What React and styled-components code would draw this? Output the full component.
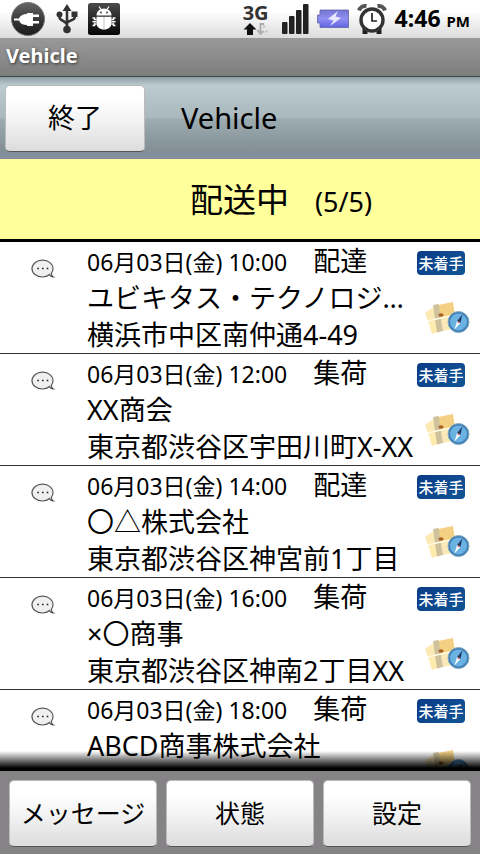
import React from "react";
import styled, { createGlobalStyle } from "styled-components";

const deliveries = [
  { id: 1, time: "06月03日(金) 10:00", kind: "配達", name: "ユビキタス・テクノロジ…", address: "横浜市中区南仲通4-49" },
  { id: 2, time: "06月03日(金) 12:00", kind: "集荷", name: "XX商会", address: "東京都渋谷区宇田川町X-XX" },
  { id: 3, time: "06月03日(金) 14:00", kind: "配達", name: "〇△株式会社", address: "東京都渋谷区神宮前1丁目" },
  { id: 4, time: "06月03日(金) 16:00", kind: "集荷", name: "×〇商事", address: "東京都渋谷区神南2丁目XX" },
  { id: 5, time: "06月03日(金) 18:00", kind: "集荷", name: "ABCD商事株式会社" },
];

function PlugIcon() {
  return (
    <svg width="36" height="36" viewBox="0 0 36 36" aria-hidden="true">
      <defs>
        <linearGradient id="plug" x1="0" y1="0" x2="0" y2="1">
          <stop offset="0" stopColor="#666" />
          <stop offset="0.6" stopColor="#333" />
          <stop offset="1" stopColor="#1c1c1c" />
        </linearGradient>
      </defs>
      <circle cx="18" cy="18" r="16.5" fill="url(#plug)" stroke="#777" />
      <path
        d="M4 17.5h5c1-3 4-4.500 8-4.500V12h6v1.500h6V16h-6v4h6v2.500h-6V25h-6v-1c-4 0-7-1.500-8-4.500H4z"
        fill="#fff"
      />
    </svg>
  );
}

function UsbIcon() {
  return (
    <svg width="22" height="30" viewBox="0 0 22 30" fill="#333" aria-hidden="true">
      <path d="M11 0l4.500 7h-9z" />
      <circle cx="11" cy="25.500" r="3.800" />
      <circle cx="3.500" cy="10.500" r="3" />
      <path d="M15.500 7.500h6v5.500h-6z" />
      <path
        d="M11 5v20M3.500 11v2.500c0 3 7.500 4 7.500 7.500M18.700 12v1.500c0 3-7.700 3-7.700 6"
        fill="none"
        stroke="#333"
        strokeWidth="2.600"
      />
    </svg>
  );
}

function DebugIcon() {
  return (
    <svg width="32" height="32" viewBox="0 0 32 32" aria-hidden="true">
      <defs>
        <linearGradient id="debug" x1="0" y1="0" x2="0" y2="1">
          <stop offset="0" stopColor="#4a4a4a" />
          <stop offset="1" stopColor="#050505" />
        </linearGradient>
      </defs>
      <rect width="32" height="32" rx="2.500" fill="url(#debug)" />
      <path d="M11 3.500l2 3M21 3.500l-2 3" stroke="#fff" strokeWidth="1.200" />
      <path
        d="M4.500 15h2v1.500h2M4.500 18.800h4M4.500 22.500h2V21h2M27.500 15h-2v1.500h-2M27.500 18.800h-4M27.500 22.500h-2V21h-2"
        fill="none"
        stroke="#fff"
        strokeWidth="1.500"
      />
      <path d="M8.500 12.500c0-4 3-7 7.500-7s7.500 3 7.500 7z" fill="#fff" />
      <path d="M8.500 13.800h15V20c0 4-3 6.500-7.500 6.500S8.500 24 8.500 20z" fill="#fff" />
      <circle cx="13" cy="9.500" r="0.900" fill="#333" />
      <circle cx="19" cy="9.500" r="0.900" fill="#333" />
      <path d="M16 14v12.500" stroke="#aaa" strokeWidth="0.700" />
    </svg>
  );
}

function TransferIcon() {
  return (
    <svg width="26" height="13" viewBox="0 0 26 13" aria-hidden="true">
      <path d="M7 0l6.500 6.500H10V12H4V6.500H0.500z" fill="#111" />
      <path d="M21 1h-3.500v8M14.500 7l3 4 3-3" fill="none" stroke="#aaa" strokeWidth="1.800" />
      <path d="M21 2v3M22 8.500h3" stroke="#c4c4c4" strokeWidth="1.800" />
    </svg>
  );
}

function SignalIcon() {
  return (
    <svg width="28" height="32" viewBox="-1 0 28 32" fill="#222" aria-hidden="true">
      <rect x="0" y="19" width="5.500" height="12" rx="1" />
      <rect x="7" y="13" width="5.500" height="18" rx="1" />
      <rect x="14" y="7" width="5.500" height="24" rx="1" />
      <rect x="21" y="1" width="5.500" height="30" rx="1" />
    </svg>
  );
}

function BatteryIcon() {
  return (
    <svg width="32" height="20" viewBox="0 0 32 20" aria-hidden="true">
      <defs>
        <linearGradient id="battery" x1="0" y1="0" x2="0" y2="1">
          <stop offset="0" stopColor="#7474d2" />
          <stop offset="0.5" stopColor="#9090f2" />
          <stop offset="1" stopColor="#6262e0" />
        </linearGradient>
      </defs>
      <path d="M3 1h28.500v17.500H3V14H.5V6H3z" fill="url(#battery)" stroke="#6262a8" strokeWidth="0.800" />
      <path d="M21 2l-10 8 5.500 1.500L13 17l11-8-5.500-1.500z" fill="#e8e8ff" />
    </svg>
  );
}

function AlarmIcon() {
  return (
    <svg width="30" height="32" viewBox="0 0 30 32" fill="none" aria-hidden="true">
      <path d="M5.500 25h5v6h-5zM24.500 25h-5v6h5z" fill="#222" />
      <circle cx="15" cy="17" r="11" fill="#fff" stroke="#333" strokeWidth="3.400" />
      <path d="M2 7.500C3 4.500 6 2.500 9.500 3M28 7.500C27 4.500 24 2.500 20.500 3" stroke="#555" strokeWidth="4" />
      <path d="M15 10v8h5" stroke="#222" strokeWidth="1.700" />
    </svg>
  );
}

function SpeechIcon() {
  return (
    <svg width="24" height="20" viewBox="0 0 24 20" aria-hidden="true">
      <path
        d="M18.500 15.500C16.800 17 14.200 18 11.500 18 5.500 18 1 14.300 1 9.700S5.500 1.200 11.500 1.200 22 4.800 22 9.700c0 2-.7 3.500-1.700 4.600.2 1.800.8 2.800 2 3.600-1.600.1-2.900-.5-3.800-2.400z"
        fill="#f0f0f0"
        stroke="#555"
        strokeWidth="1.200"
      />
      <path d="M6.300 9.500h1.600M11 9.500h1.600M15.700 9.500h1.600" stroke="#222" strokeWidth="1.600" />
    </svg>
  );
}

function MapIcon() {
  return (
    <svg width="48" height="40" viewBox="0 0 48 40" aria-hidden="true">
      <path d="M3 18l8-6 3 12-8 2z" fill="#fbeab4" />
      <path d="M6 26l8-2 4 12-8 3z" fill="#fdebb0" />
      <path d="M16 10l15-3 2 14-14 3z" fill="#f4d182" />
      <path d="M19 24l14-3 1 12-13 3z" fill="#fae9b6" />
      <path d="M11 10l5.500-1 4.500 27-6 1.500z" fill="#cfc199" />
      <path d="M6 26l13-3 14-3" stroke="#fffbe8" strokeWidth="1.500" fill="none" />
      <ellipse cx="19" cy="20" rx="2.500" ry="1.800" fill="#a6611d" />
      <circle cx="36.500" cy="27" r="10.500" fill="#3f7db4" stroke="#8aaac3" />
      <circle cx="36.500" cy="27" r="8.500" fill="#6ab2e2" />
      <path d="M40.500 19.500l-2.200 8.500-3.200-2z" fill="#253a68" />
      <path d="M32.500 34.500l2.600-8.500 3.200 2z" fill="#fff" />
      <circle cx="36.700" cy="27" r="1" fill="#b33a3a" />
    </svg>
  );
}

function Delivery({ delivery }) {
  return (
    <Row>
      <MemoButton type="button" aria-label="メモ">
        <SpeechIcon />
      </MemoButton>
      <Details>
        <Schedule>
          <time>{delivery.time}</time>
          <Kind>{delivery.kind}</Kind>
        </Schedule>
        <Line>{delivery.name}</Line>
        {delivery.address && <Line>{delivery.address}</Line>}
      </Details>
      <Actions>
        <Status>未着手</Status>
        <MapButton type="button" aria-label="地図">
          <MapIcon />
        </MapButton>
      </Actions>
    </Row>
  );
}

function App() {
  return (
    <Screen>
      <GlobalStyle />
      <StatusBar>
        <Icons>
          <PlugIcon />
          <UsbIcon />
          <DebugIcon />
        </Icons>
        <Icons $right>
          <Network>
            3G
            <TransferIcon />
          </Network>
          <SignalIcon />
          <BatteryIcon />
          <AlarmIcon />
          <Clock>
            4:46 <small>PM</small>
          </Clock>
        </Icons>
      </StatusBar>
      <WindowTitle>Vehicle</WindowTitle>
      <Toolbar>
        <ExitButton type="button">終了</ExitButton>
        <Title>Vehicle</Title>
      </Toolbar>
      <Summary>
        <h2>配送中</h2>
        <span>(5/5)</span>
      </Summary>
      <ListArea>
        <List>
          {deliveries.map((delivery) => (
            <Delivery key={delivery.id} delivery={delivery} />
          ))}
        </List>
        <Fade />
      </ListArea>
      <Footer>
        <Button type="button">メッセージ</Button>
        <Button type="button">状態</Button>
        <Button type="button">設定</Button>
      </Footer>
    </Screen>
  );
}

const GlobalStyle = createGlobalStyle`
  * {
    box-sizing: border-box;
  }

  body {
    margin: 0;
    background: #fff;
    color: #000;
    font-family: "Noto Sans", "Noto Sans CJK JP", sans-serif;
  }

  button {
    font-family: inherit;
    color: inherit;
    cursor: pointer;
  }

  svg {
    display: block;
    flex: none;
  }
`;

const Screen = styled.div`
  display: flex;
  flex-direction: column;
  height: 100vh;
  overflow: hidden;
`;

const StatusBar = styled.header`
  display: flex;
  flex: none;
  justify-content: space-between;
  height: 38px;
  padding: 0 10px;
  background: linear-gradient(#fff 30%, #dcdcdc);
`;

const Icons = styled.div`
  display: flex;
  align-items: center;
  gap: ${(props) => (props.$right ? "8px" : "10px")};
`;

const Network = styled.div`
  display: flex;
  flex-direction: column;
  align-items: center;
  margin-right: 4px;
  font-size: 20px;
  font-weight: 700;
  line-height: 20px;
  color: #333;
`;

const Clock = styled.time`
  font-size: 23px;
  font-weight: 700;
  line-height: 36px;
  white-space: nowrap;

  small {
    font-size: 15px;
  }
`;

const WindowTitle = styled.div`
  flex: none;
  height: 39px;
  padding: 0 6px;
  border-bottom: 1px solid #3c4648;
  background: linear-gradient(#999, #7c7e7c);
  color: #fff;
  font-size: 20px;
  font-weight: 700;
  line-height: 36px;
  text-shadow: 1px 1px 3px #333;
`;

const Toolbar = styled.div`
  display: flex;
  flex: none;
  align-items: center;
  gap: 36px;
  height: 82px;
  padding: 0 5px;
  background: linear-gradient(#8d9ca3, #bccbd0 10%, #a9b8bd 50%, #9dacb1 51%, #829096 90%, #858da0);
`;

const Button = styled.button`
  flex: 1;
  height: 67px;
  padding: 0 0 4px;
  border: 1px solid #bbb;
  border-bottom-color: #555;
  border-radius: 5px;
  background: linear-gradient(#fff 20%, #f4f4f4 50%, #dcdcdc);
  font-size: 25px;
`;

const ExitButton = styled(Button)`
  flex: none;
  width: 140px;
  font-size: 27px;
`;

const Title = styled.h1`
  margin: 0;
  padding-bottom: 2px;
  font-size: 29px;
  font-weight: 400;
`;

const Summary = styled.div`
  display: flex;
  flex: none;
  align-items: baseline;
  justify-content: center;
  gap: 26px;
  height: 83px;
  padding-left: 82px;
  border-bottom: 3px solid #000;
  background: #ffff9c;
  font-size: 27px;
  line-height: 82px;

  h2 {
    margin: 0;
    font-size: 33px;
    font-weight: 400;
  }
`;

const ListArea = styled.main`
  position: relative;
  flex: 1;
  min-height: 0;
  overflow: hidden;
`;

const List = styled.ul`
  margin: 0;
  padding: 0;
  list-style: none;
`;

const Row = styled.li`
  display: flex;
  height: 112px;
  border-bottom: 1px solid #333;
`;

const MemoButton = styled.button`
  display: flex;
  flex: none;
  width: 87px;
  padding: 17px 0 0 31px;
  border: 0;
  background: none;
`;

const Details = styled.div`
  flex: 1;
  min-width: 0;
`;

const Schedule = styled.div`
  display: flex;
  align-items: baseline;
  gap: 26px;
  height: 38px;
  font-size: 23px;
  line-height: 38px;
  white-space: nowrap;
`;

const Kind = styled.span`
  font-size: 27px;
`;

const Line = styled.div`
  overflow: hidden;
  height: 37px;
  font-size: 27px;
  line-height: 36px;
  text-overflow: ellipsis;
  white-space: nowrap;
`;

const Actions = styled.div`
  display: flex;
  flex: none;
  flex-direction: column;
  gap: 20px;
  width: 66px;
  padding: 9px 0 0 3px;
`;

const Status = styled.span`
  width: 48px;
  border-radius: 4px;
  background: linear-gradient(135deg, #0b3c86, #125596);
  color: #fff;
  font-size: 15px;
  font-weight: 500;
  line-height: 24px;
  text-align: center;
`;

const MapButton = styled.button`
  margin-left: 5px;
  padding: 0;
  border: 0;
  background: none;
`;

const Fade = styled.div`
  position: absolute;
  right: 0;
  bottom: 0;
  left: 0;
  height: 20px;
  background: linear-gradient(transparent, #000 85%);
  pointer-events: none;
`;

const Footer = styled.footer`
  display: flex;
  flex: none;
  gap: 9px;
  padding: 9px 9px 7px;
  background: #868387;
`;

export default App;
